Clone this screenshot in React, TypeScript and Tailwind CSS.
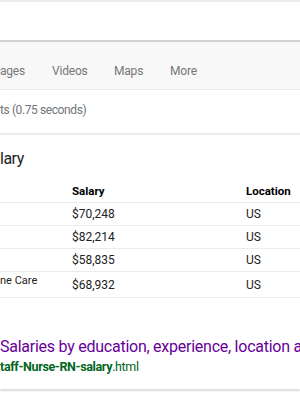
const rows = [
  { job: "", salary: "$70,248", loc: "US" },
  { job: "", salary: "$82,214", loc: "US" },
  { job: "", salary: "$58,835", loc: "US" },
  { job: "ne Care", salary: "$68,932", loc: "US" },
];

export default function App() {
  return (
    <div className="w-[300px] h-[407px] overflow-hidden bg-white font-['Roboto',Arial,sans-serif]">
      {/* search bar area */}
      <div className="h-[2px] bg-[#ececec]" />
      <div className="h-[38px] bg-white" />
      <div className="h-[2px] bg-[#d2d2d2]" />

      {/* tabs */}
      <div className="h-[48px] bg-[#f8f8f8] border-b border-[#ebebeb] flex items-center pt-[11px] text-[12px] tracking-[-0.2px] text-[#777]">
        <span className="w-[52px]">ages</span>
        <span className="w-[62px]">Videos</span>
        <span className="w-[56px]">Maps</span>
        <span>More</span>
      </div>

      {/* result stats */}
      <div className="h-[43px] flex items-center text-[12px] tracking-[-0.4px] text-[#70757a] pb-[3px]">
        ts (0.75 seconds)
      </div>

      {/* card */}
      <div className="border-t-2 border-[#ededed] shadow-[0_2px_2px_rgba(0,0,0,0.15)] pb-[13px]">
        <div className="h-[42px] flex items-end pb-[10px] text-[16px] tracking-[-0.5px] text-[#222] leading-none">lary</div>

        <div className="text-[12px] text-[#222]">
          <div className="h-[25px] flex items-center font-bold text-black pt-[4px] text-[11.5px]">
            <span className="w-[72px]" />
            <span className="w-[174px]">Salary</span>
            <span>Location</span>
          </div>
          {rows.map((r, i) => (
            <div
              key={i}
              className={`border-t border-[#ebebeb] flex ${i === 3 ? "h-[27px] border-b" : "h-[23px]"}`}
            >
              <span className="w-[72px] text-[11px] leading-none pt-[3px]">{r.job}</span>
              <span className="w-[174px] self-center">{r.salary}</span>
              <span className="self-center">{r.loc}</span>
            </div>
          ))}
        </div>

        <div className="pt-[38px] whitespace-nowrap">
          <div className="text-[16px] tracking-[-0.25px] text-[#660099] leading-[22px]">
            Salaries by education, experience, location and more
          </div>
          <div className="text-[12.5px] tracking-[-0.35px] text-[#006621] leading-[18px]">
            <span className="font-bold">taff-Nurse-RN-salary</span>.html
          </div>
        </div>
      </div>
    </div>
  );
}
